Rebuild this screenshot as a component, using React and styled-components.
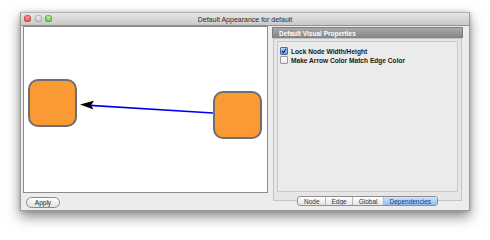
import React from 'react'
import styled, { createGlobalStyle } from 'styled-components'

const GlobalStyle = createGlobalStyle`
  html, body {
    margin: 0;
    padding: 0;
    background: #fff;
  }
  body {
    font-family: "Liberation Sans", Arial, sans-serif;
  }
`

const Page = styled.div`
  width: 490px;
  height: 240px;
  padding: 12px 0 0 20px;
  box-sizing: border-box;
`

const Window = styled.div`
  width: 450px;
  height: 199px;
  display: flex;
  flex-direction: column;
  background: #ececec;
  border: 1px solid #9a9a9a;
  border-top-color: #b5b5b5;
  box-sizing: border-box;
  box-shadow: 0 6px 12px rgba(0, 0, 0, 0.45), 0 0 4px rgba(0, 0, 0, 0.2);
`

const TitleBar = styled.div`
  height: 12px;
  flex-shrink: 0;
  position: relative;
  display: flex;
  align-items: center;
  justify-content: center;
  background: linear-gradient(#e6e6e6, #c9c9c9);
  border-bottom: 1px solid #8e8e8e;
  font-size: 7px;
  color: #2e2e2e;
`

const Lights = styled.div`
  position: absolute;
  left: 3px;
  top: 2px;
  display: flex;
  gap: 3.5px;
`

const Light = styled.span`
  width: 7px;
  height: 7px;
  border-radius: 50%;
  background: ${p => p.$c};
  box-shadow: inset 0 0 0 0.5px rgba(0, 0, 0, 0.3);
`

const Body = styled.div`
  flex: 1;
  display: flex;
  gap: 4px;
  padding: 0 6px 0 2px;
  min-height: 0;
`

const LeftCol = styled.div`
  width: 245px;
  display: flex;
  flex-direction: column;
`

const Canvas = styled.div`
  height: 167px;
  flex-shrink: 0;
  background: #fff;
  border: 1px solid #8c8c8c;
  box-sizing: border-box;
  overflow: hidden;

  svg {
    display: block;
  }
`

const ButtonRow = styled.div`
  padding: 4px 3px 0;
`

const PillButton = styled.button`
  width: 34px;
  height: 11px;
  padding: 0;
  display: block;
  border: 1px solid #8a8a8a;
  border-radius: 6px;
  background: linear-gradient(#ffffff, #e2e2e2);
  font-family: "Liberation Sans", Arial, sans-serif;
  font-size: 6.5px;
  color: #222;
  line-height: 9px;
`

const RightCol = styled.div`
  flex: 1;
  display: flex;
  flex-direction: column;
  padding-top: 1px;
`

const PanelHeader = styled.div`
  height: 11px;
  flex-shrink: 0;
  display: flex;
  align-items: center;
  padding-left: 6px;
  background: linear-gradient(#a9a9a9, #848484);
  border: 1px solid #7d7d7d;
  border-bottom: none;
  box-sizing: border-box;
  font-size: 6.5px;
  font-weight: bold;
  color: #fff;
`

const Pane = styled.div`
  height: 163px;
  flex-shrink: 0;
  display: flex;
  flex-direction: column;
  padding: 2px 3px 8px 3px;
  margin: 0 1px;
  background: #e6e6e6;
  border: 1px solid #c4c4c4;
  box-sizing: border-box;
`

const ListBox = styled.div`
  flex: 1;
  display: flex;
  flex-direction: column;
  gap: 1px;
  padding: 5px 2px;
  background: #ebebeb;
  border: 1px solid #c9c9c9;
`

const CheckRow = styled.label`
  display: flex;
  align-items: center;
  gap: 3px;
  height: 8px;
  font-size: 6.6px;
  font-weight: bold;
  color: #1a1a1a;
`

const Box = styled.span`
  width: 8px;
  height: 8px;
  flex-shrink: 0;
  border: 1px solid ${p => (p.$on ? '#4a6ea8' : '#9a9a9a')};
  border-radius: 1px;
  box-sizing: border-box;
  background: ${p => (p.$on ? 'linear-gradient(#bcd6f5, #6b9be0)' : 'linear-gradient(#ffffff, #e8e8e8)')};
  display: flex;
  align-items: center;
  justify-content: center;
`

const Tabs = styled.div`
  display: flex;
  align-self: center;
  margin-top: -5px;
  border: 1px solid #8f8f8f;
  border-radius: 3px;
  overflow: hidden;
  background: linear-gradient(#ffffff, #e4e4e4);
`

const Tab = styled.div`
  height: 8px;
  padding: 0 5.5px;
  display: flex;
  align-items: center;
  font-size: 6.5px;
  color: ${p => (p.$active ? '#143c78' : '#333')};
  background: ${p => (p.$active ? 'linear-gradient(#cfe4fb, #90bbf0)' : 'transparent')};
  border-left: ${p => (p.$first ? 'none' : '1px solid #b8b8b8')};
`

const Check = () => (
  <svg width="6" height="6" viewBox="0 0 6 6">
    <path d="M1 3 L2.5 4.6 L5 0.8" fill="none" stroke="#10284f" strokeWidth="1.1" />
  </svg>
)

const Graph = () => (
  <svg width="243" height="165" viewBox="0 0 243 165">
    <rect x="5" y="53" width="47" height="46" rx="9" fill="#fb9934" stroke="#6e6e6e" strokeWidth="2" />
    <rect x="190" y="65" width="47" height="46" rx="9" fill="#fb9934" stroke="#6e6e6e" strokeWidth="2" />
    <line x1="189" y1="86" x2="66" y2="78.4" stroke="#0000f0" strokeWidth="1.6" />
    <path d="M56 77.6 L70 73.8 L67 78.2 L69.5 82.4 Z" fill="#000" />
  </svg>
)

const tabs = ['Node', 'Edge', 'Global', 'Dependencies']

export default function App() {
  return (
    <>
      <GlobalStyle />
      <Page>
        <Window>
          <TitleBar>
            <Lights>
              <Light $c="radial-gradient(circle at 50% 35%, #ff9a9a, #d62a2a)" />
              <Light $c="radial-gradient(circle at 50% 35%, #e8e8e8, #bdbdbd)" />
              <Light $c="radial-gradient(circle at 50% 35%, #b8f0a0, #3fa82a)" />
            </Lights>
            Default Appearance for default
          </TitleBar>
          <Body>
            <LeftCol>
              <Canvas>
                <Graph />
              </Canvas>
              <ButtonRow>
                <PillButton>Apply</PillButton>
              </ButtonRow>
            </LeftCol>
            <RightCol>
              <PanelHeader>Default Visual Properties</PanelHeader>
              <Pane>
                <ListBox>
                  <CheckRow>
                    <Box $on><Check /></Box>
                    Lock Node Width/Height
                  </CheckRow>
                  <CheckRow>
                    <Box />
                    Make Arrow Color Match Edge Color
                  </CheckRow>
                </ListBox>
              </Pane>
              <Tabs>
                {tabs.map((t, i) => (
                  <Tab key={t} $active={t === 'Dependencies'} $first={i === 0}>
                    {t}
                  </Tab>
                ))}
              </Tabs>
            </RightCol>
          </Body>
        </Window>
      </Page>
    </>
  )
}
